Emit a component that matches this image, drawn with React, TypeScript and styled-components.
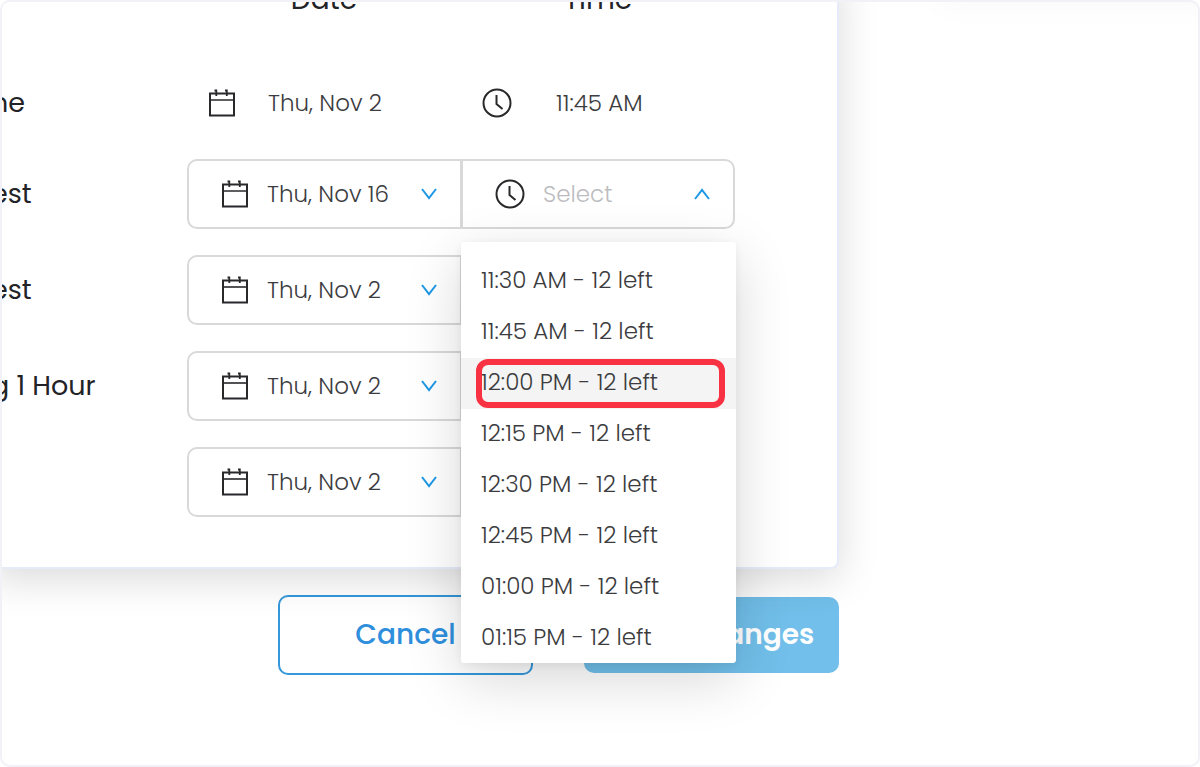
import React from "react";
import styled, { createGlobalStyle } from "styled-components";

const GlobalStyle = createGlobalStyle`
  *, *::before, *::after { box-sizing: border-box; }
  body {
    margin: 0;
    background: #fff;
    color: #3c3c40;
    font-family: Poppins, Inter, "Liberation Sans", sans-serif;
    font-size: 23px;
    font-weight: 300;
  }
`;

const Frame = styled.main`
  position: relative;
  min-height: 100vh;
  overflow: hidden;
  border: 2px solid #f1f1f7;
  border-radius: 10px;
  background: #fff;

  &::before {
    content: "";
    position: absolute;
    top: -24px;
    right: -40px;
    width: 300px;
    height: 16px;
    box-shadow: 0 4px 36px rgba(0, 0, 0, 0.06);
  }
`;

const Card = styled.section`
  position: relative;
  max-width: 848px;
  margin: -32px 0 0 -11px;
  padding: 0 102px 37px 0;
  border: 2px solid #e6ebfa;
  border-top: 0;
  border-left: 0;
  border-radius: 0 0 8px 0;
  background: #fff;
  box-shadow: 0 10px 40px rgba(0, 0, 0, 0.15);
`;

const Schedule = styled.table`
  width: 100%;
  table-layout: fixed;
  border-collapse: collapse;
`;

const ColumnTitle = styled.th`
  height: 90px;
  padding: 14px 0 0;
  vertical-align: top;
  font-size: 28px;
  font-weight: 400;
  line-height: 32px;
  text-align: center;
  color: #232327;
`;

const LabelColumn = styled.col``;
const FieldColumn = styled.col`
  width: 274px;
`;

const RowTitle = styled.th`
  padding: 0;
  font-size: 27px;
  font-weight: 400;
  line-height: 32px;
  text-align: left;
  white-space: nowrap;
  color: #232327;
`;

const Cell = styled.td<{ $fixed?: boolean }>`
  height: ${(p) => (p.$fixed ? "86px" : "96px")};
  padding: 0;
`;

const FixedValue = styled.div<{ $gap: number }>`
  display: flex;
  align-items: center;
  gap: ${(p) => p.$gap}px;
  padding-left: 21px;
`;

const Field = styled.div<{ $end?: boolean }>`
  position: relative;
  display: flex;
  align-items: center;
  height: 70px;
  margin-right: ${(p) => (p.$end ? "0" : "-1px")};
  padding: 0 22px 0 32px;
  border: 2px solid #d9d9d9;
  border-radius: ${(p) => (p.$end ? "0 10px 10px 0" : "10px 0 0 10px")};
`;

const Picker = styled.select<{ $empty?: boolean }>`
  appearance: none;
  flex: 1;
  min-width: 0;
  height: 100%;
  margin-left: 18px;
  padding: 0;
  border: 0;
  outline: 0;
  background: transparent;
  color: ${(p) => (p.$empty ? "#bcbcc0" : "#3c3c40")};
  font: inherit;
  opacity: 1;
`;

const Menu = styled.ul`
  position: absolute;
  z-index: 2;
  top: 81px;
  left: -2px;
  right: -3px;
  max-height: 421px;
  margin: 0;
  padding: 14px 0 0;
  overflow: hidden;
  list-style: none;
  border-radius: 4px;
  background: #fff;
`;

const MenuShadow = styled.div`
  position: absolute;
  z-index: 1;
  top: 81px;
  left: -2px;
  right: -3px;
  height: 421px;
  border-radius: 4px;
  box-shadow: 0 16px 56px rgba(0, 0, 0, 0.16), 0 2px 8px rgba(0, 0, 0, 0.06);
`;

const MenuItem = styled.li`
  position: relative;
`;

const Option = styled.button<{ $active?: boolean }>`
  display: block;
  width: 100%;
  height: 51px;
  padding: 0 20px 3px;
  border: 0;
  background: ${(p) => (p.$active ? "#f4f4f4" : "#fff")};
  color: #3c3c40;
  font: inherit;
  text-align: left;
  white-space: nowrap;
`;

const Highlight = styled.span`
  position: absolute;
  inset: 1px 11px 1px 15px;
  border: 6px solid #f93243;
  border-radius: 12px;
  pointer-events: none;
`;

const Actions = styled.footer`
  display: flex;
  align-items: center;
  gap: 51px;
  padding: 26px 0 24px 276px;
`;

const Action = styled.button<{ $primary?: boolean }>`
  width: 255px;
  height: ${(p) => (p.$primary ? "76px" : "80px")};
  padding: 0;
  border: ${(p) => (p.$primary ? "0" : "2px solid #3498db")};
  border-radius: 10px;
  background: ${(p) => (p.$primary ? "#71bfea" : "#fff")};
  color: ${(p) => (p.$primary ? "#fff" : "#2f8fdc")};
  font-family: inherit;
  font-size: 28px;
  font-weight: ${(p) => (p.$primary ? 600 : 500)};
`;

const Icon = styled.svg`
  flex: none;
  fill: none;
  stroke: #29292c;
  stroke-width: 2;
`;

const Chevron = styled.svg`
  flex: none;
  fill: none;
  stroke: #1c98e6;
  stroke-width: 2;
`;

const CalendarIcon = () => (
  <Icon width="28" height="30" viewBox="0 0 28 30" aria-hidden="true">
    <path d="M2 5.5h24v22h-24z" />
    <path d="M2 12h24" strokeWidth="1.6" />
    <path d="M6.500 2.500h1.800V8M17 2.500h1.800V8" strokeWidth="1.800" />
  </Icon>
);

const ClockIcon = () => (
  <Icon width="30" height="30" viewBox="0 0 30 30" aria-hidden="true">
    <circle cx="15" cy="15" r="13.500" />
    <path d="M14.500 7v9l6 5" />
  </Icon>
);

const Arrow = ({ up }: { up?: boolean }) => (
  <Chevron width="18" height="14" viewBox="0 0 18 14" aria-hidden="true">
    <path d={up ? "M2 12l7-9 7 9" : "M2 2l7 9 7-9"} />
  </Chevron>
);

const rows = [
  { label: "est", date: "Thu, Nov 16", open: true },
  { label: "est", date: "Thu, Nov 2" },
  { label: "g 1 Hour", date: "Thu, Nov 2" },
  { label: "", date: "Thu, Nov 2" },
];

const times = [
  "11:30 AM", "11:45 AM", "12:00 PM", "12:15 PM",
  "12:30 PM", "12:45 PM", "01:00 PM", "01:15 PM",
];

export default function App() {
  return (
    <>
      <GlobalStyle />
      <Frame>
        <Card>
          <Schedule>
            <colgroup>
              <LabelColumn />
              <FieldColumn />
              <FieldColumn />
            </colgroup>
            <thead>
              <tr>
                <ColumnTitle />
                <ColumnTitle scope="col">Date</ColumnTitle>
                <ColumnTitle scope="col">Time</ColumnTitle>
              </tr>
            </thead>
            <tbody>
              <tr>
                <RowTitle scope="row">ne</RowTitle>
                <Cell $fixed>
                  <FixedValue $gap={32}><CalendarIcon />Thu, Nov 2</FixedValue>
                </Cell>
                <Cell $fixed>
                  <FixedValue $gap={44}><ClockIcon />11:45 AM</FixedValue>
                </Cell>
              </tr>
              {rows.map((row, i) => (
                <tr key={i}>
                  <RowTitle scope="row">{row.label}</RowTitle>
                  <Cell>
                    <Field>
                      <CalendarIcon />
                      <Picker aria-label="Date" defaultValue={row.date}>
                        <option>{row.date}</option>
                      </Picker>
                      <Arrow />
                    </Field>
                  </Cell>
                  <Cell>
                    {row.open && (
                      <Field $end>
                        <ClockIcon />
                        <Picker aria-label="Time" $empty>
                          <option>Select</option>
                        </Picker>
                        <Arrow up />
                        <MenuShadow />
                        <Menu aria-label="Available times">
                          {times.map((time) => (
                            <MenuItem key={time}>
                              <Option type="button" $active={time === "12:00 PM"}>
                                {time} - 12 left
                              </Option>
                              {time === "12:00 PM" && <Highlight />}
                            </MenuItem>
                          ))}
                        </Menu>
                      </Field>
                    )}
                  </Cell>
                </tr>
              ))}
            </tbody>
          </Schedule>
        </Card>
        <Actions>
          <Action type="button">Cancel</Action>
          <Action type="button" $primary>Save Changes</Action>
        </Actions>
      </Frame>
    </>
  );
}
